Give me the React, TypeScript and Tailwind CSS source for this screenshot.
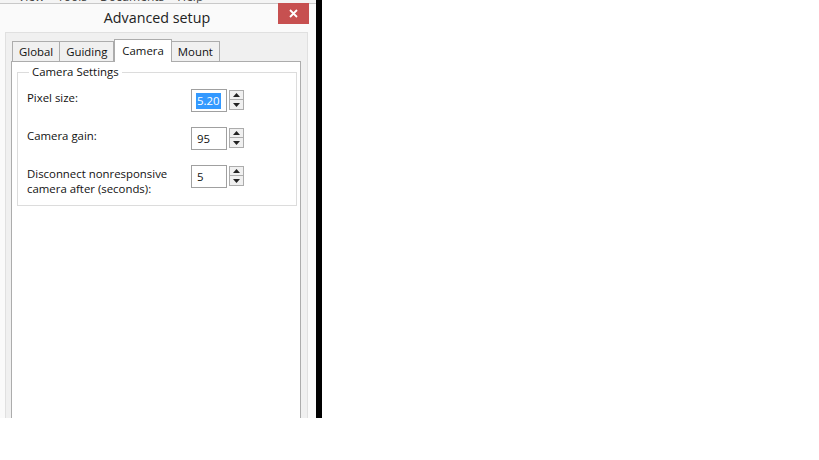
import React from 'react';

const font = { fontFamily: '"Open Sans", "Noto Sans", Arial, sans-serif' };

const SpinButtons: React.FC = () => (
  <div className="flex flex-col ml-[2px] mt-[1px]">
    <div className="w-[15px] h-[10px] bg-[#f0f0f0] border border-[#acacac] flex items-center justify-center">
      <svg width="7" height="4" viewBox="0 0 7 4"><path d="M3.5 0 L7 4 L0 4 Z" fill="#222" /></svg>
    </div>
    <div className="w-[15px] h-[10px] bg-[#f0f0f0] border border-t-0 border-[#acacac] flex items-center justify-center">
      <svg width="7" height="4" viewBox="0 0 7 4"><path d="M0 0 L7 0 L3.5 4 Z" fill="#222" /></svg>
    </div>
  </div>
);

const SpinRow: React.FC<{ label: React.ReactNode; value: string; selected?: boolean }> = ({ label, value, selected }) => (
  <div className="flex items-start">
    <div className="w-[164px] pt-[1px] text-[11.4px] leading-[15px] text-[#111]">{label}</div>
    <div className="flex items-start">
      <div className="w-[36px] h-[23px] bg-white border border-[#a0a0a0] flex items-center pl-[4px] text-[11.4px]">
        {selected ? (
          <span className="bg-[#3399ff] text-white px-[1px] leading-[16px]">{value}</span>
        ) : (
          <span className="text-[#111] px-[1px]">{value}</span>
        )}
      </div>
      <SpinButtons />
    </div>
  </div>
);

const App: React.FC = () => {
  const tabs = ['Global', 'Guiding', 'Camera', 'Mount'];
  return (
    <div className="w-[819px] h-[460px] bg-white flex items-start overflow-hidden" style={font}>
      <div className="w-[316px] h-[418px] flex flex-col bg-[#fafafa]">
        {/* parent menu bar, mostly hidden */}
        <div className="h-[4px] overflow-hidden bg-[#f4f4f4] border-b border-[#c9c9c9] flex gap-[13px] pl-[18px] text-[12px] text-[#444]">
          <span className="-mt-[12px]">View</span>
          <span className="-mt-[12px]">Tools</span>
          <span className="-mt-[12px]">Documents</span>
          <span className="-mt-[12px]">Help</span>
        </div>
        {/* title bar */}
        <div className="h-[28px] flex items-start relative">
          <div className="flex-1 text-center text-[14.3px] text-[#222] pt-[3px] pr-[2px]">Advanced setup</div>
          <div className="absolute right-[7px] top-[-1px] w-[31px] h-[21px] bg-[#c75050] flex items-center justify-center text-white">
            <svg width="9" height="9" viewBox="0 0 9 9"><path d="M1 1 L8 8 M8 1 L1 8" stroke="white" strokeWidth="1.8" /></svg>
          </div>
        </div>
        {/* client area */}
        <div className="flex-1 ml-[5px] mr-[8px] bg-[#f0f0f0] border-t border-l border-r border-[#e0e0e0] pl-[5px] pr-[6px] pt-[5px] flex flex-col">
          <div className="flex items-end pl-[1px] h-[23px]">
            {tabs.map((t) => (
              t === 'Camera' ? (
                <div key={t} className="h-[23px] px-[7px] bg-white border border-b-0 border-[#acacac] text-[11.4px] text-[#111] pt-[2px] -mb-[1px] z-10 relative">{t}</div>
              ) : (
                <div key={t} className="h-[20px] px-[6px] bg-[#f0f0f0] border border-b-0 border-[#acacac] text-[11.4px] text-[#111] pt-[1px] -ml-[1px] first:ml-0">{t}</div>
              )
            ))}
          </div>
          <div className="flex-1 bg-white border border-b-0 border-[#acacac] pt-[3px] pl-[5px] pr-[3px]">
            <fieldset className="border border-[#dcdcdc] pl-[9px] pr-[6px] pb-[16px] pt-[10px] h-[141px]">
              <legend className="ml-[2px] px-[3px] text-[11.4px] text-[#111] leading-[14px]">Camera Settings</legend>
              <div className="flex flex-col gap-[15px]">
                <SpinRow label="Pixel size:" value="5.20" selected />
                <SpinRow label="Camera gain:" value="95" />
                <SpinRow label={<>Disconnect nonresponsive<br />camera after (seconds):</>} value="5" />
              </div>
            </fieldset>
          </div>
        </div>
      </div>
      <div className="w-[6px] h-[418px] bg-black" />
    </div>
  );
};

export default App;
